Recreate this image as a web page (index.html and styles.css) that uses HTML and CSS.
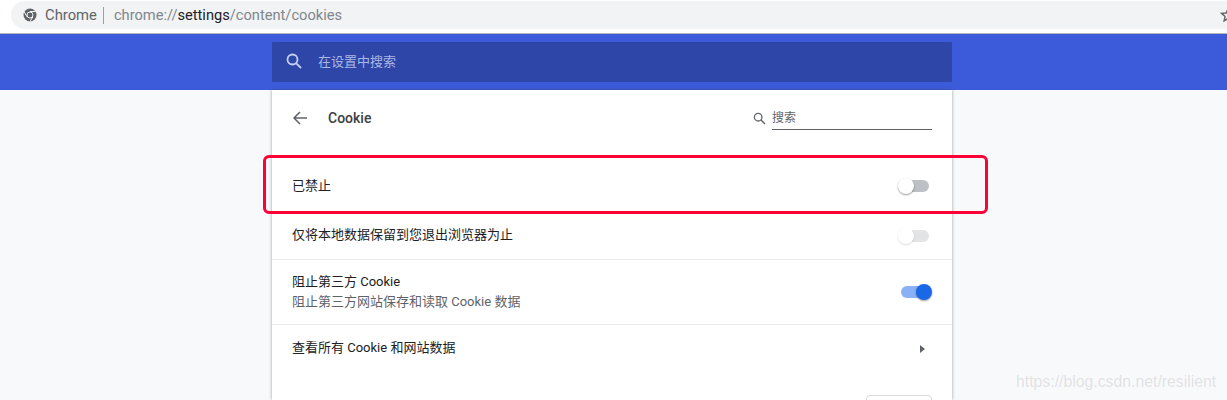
FILE: index.html
```html
<!DOCTYPE html>
<html>
<head>
    <title>Cookie</title>
    <link rel="stylesheet" href="styles.css">
</head>
<body>
    <div class="toolbar">
        <div class="omnibox">
            <svg class="chrome-icon" width="14" height="14" viewBox="0 0 14 14">
                <circle cx="7" cy="7" r="6.5" fill="#5f6368"/>
                <circle cx="7" cy="7" r="3" fill="#5f6368" stroke="#f1f3f4" stroke-width="1"/>
                <path d="M7 3.5h5.6M4 8.8 1.3 4M9.9 8.8 7 13.4" stroke="#f1f3f4" stroke-width="1" fill="none"/>
            </svg>
            <span class="site-name">Chrome</span>
            <span class="url">chrome://<b>settings</b>/content/cookies</span>
            <svg class="star" width="16" height="16" viewBox="0 0 16 16">
                <path d="M8 1.8 9.8 6l4.6.4-3.5 3 1 4.5L8 11.5l-3.9 2.4 1-4.5-3.5-3L6.200 6z" fill="none" stroke="#5f6368" stroke-width="1.400"/>
            </svg>
        </div>
    </div>

    <header>
        <div class="main-search">
            <svg width="18" height="18" viewBox="0 0 18 18">
                <circle cx="7.500" cy="7.500" r="5" fill="none" stroke="#c6d0f0" stroke-width="1.800"/>
                <path d="M11.300 11.300 16 16" stroke="#c6d0f0" stroke-width="1.800"/>
            </svg>
            <span class="main-search-text">在设置中搜索</span>
        </div>
    </header>

    <div class="page">
        <div class="card">
            <div class="card-head">
                <svg class="back" width="16" height="16" viewBox="0 0 16 16">
                    <path d="M15 8H2M8 2 2 8l6 6" fill="none" stroke="#5f6368" stroke-width="1.500"/>
                </svg>
                <h2>Cookie</h2>
                <div class="card-search">
                    <svg width="13" height="13" viewBox="0 0 13 13">
                        <circle cx="5.200" cy="5.200" r="3.800" fill="none" stroke="#5f6368" stroke-width="1.300"/>
                        <path d="M8 8l4 4" stroke="#5f6368" stroke-width="1.300"/>
                    </svg>
                    <span class="search-input">搜索</span>
                </div>
            </div>

            <div class="row row-first">
                <span>已禁止</span>
                <span class="toggle"></span>
            </div>
            <div class="row row-second">
                <span class="row-text-up">仅将本地数据保留到您退出浏览器为止</span>
                <span class="toggle toggle-disabled"></span>
            </div>
            <div class="row row-third">
                <div class="row-text-block">
                    <div>阻止第三方 Cookie</div>
                    <div class="secondary">阻止第三方网站保存和读取 Cookie 数据</div>
                </div>
                <span class="toggle toggle-on"></span>
            </div>
            <div class="row row-fourth">
                <span class="row-text-up">查看所有 Cookie 和网站数据</span>
                <span class="arrow"></span>
            </div>
            <div class="card-foot">
                <span class="foot-button"></span>
            </div>
        </div>
    </div>

    <div class="highlight"></div>
    <div class="watermark">https://blog.csdn.net/resilient</div>
</body>
</html>
```

FILE: styles.css
```css
html, body {
    height: 400px;
    overflow: hidden;
}

body {
    margin: 0;
    position: relative;
    font-family: Roboto, "Noto Sans CJK SC", sans-serif;
    font-size: 13px;
    color: #202124;
    background-color: #f8f9fb;
}

.toolbar {
    height: 34px;
    padding: 1px 0 0 11px;
    box-sizing: border-box;
    background-color: white;
    border-bottom: 1px solid #b4b6ba;
}

.omnibox {
    height: 28px;
    display: flex;
    align-items: center;
    padding-left: 12px;
    border-radius: 14px 0 0 14px;
    background-color: #f1f3f4;
}

.site-name {
    margin-left: 8px;
    padding-right: 6px;
    border-right: 1px solid #9aa0a6;
    font-size: 14.8px;
    line-height: 17px;
    color: #5f6368;
}

.url {
    margin-left: 10px;
    font-size: 14.65px;
    color: #80868b;
}

.url b {
    font-weight: 400;
    color: #202124;
}

.star {
    margin-left: auto;
    margin-right: -9px;
}

header {
    height: 56px;
    padding: 8px 0 0 272px;
    box-sizing: border-box;
    background-color: #3b5bdb;
}

.main-search {
    width: 680px;
    height: 40px;
    display: flex;
    align-items: center;
    gap: 15px;
    padding: 0 0 2px 13px;
    box-sizing: border-box;
    border-radius: 1px;
    background-color: #2d46a8;
    color: #aab6e3;
}

.main-search-text {
    padding-bottom: 2px;
}

.page {
    padding-left: 272px;
}

.card {
    width: 680px;
    height: 310px;
    overflow: hidden;
    background-color: white;
    box-shadow: 0 0 3px rgba(60, 64, 67, 0.5);
}

.card-head {
    height: 56px;
    display: flex;
    align-items: center;
    padding: 0 20px;
}

.back {
    margin-right: 20px;
}

h2 {
    margin: 0;
    font-size: 14px;
    font-weight: 500;
    color: #3c4043;
}

.card-search {
    margin-left: auto;
    display: flex;
    align-items: center;
    gap: 6px;
}

.search-input {
    width: 160px;
    height: 24px;
    line-height: 25px;
    box-sizing: border-box;
    border-bottom: 1px solid #5f6368;
    color: #5f6368;
    font-size: 12px;
}

.row {
    display: flex;
    align-items: center;
    justify-content: space-between;
    padding: 0 20px;
    line-height: 20px;
}

.row-first {
    height: 53px;
    margin-top: 13px;
}

.row-second {
    height: 47px;
    border-bottom: 1px solid #e8eaed;
}

.row-text-up {
    padding-bottom: 2px;
}

.row-third {
    height: 64px;
    border-bottom: 1px solid #e8eaed;
}

.row-text-block {
    padding-bottom: 1px;
}

.row-fourth {
    height: 47px;
}

.secondary {
    color: #5f6368;
}

.toggle {
    position: relative;
    width: 24px;
    height: 12px;
    margin-right: 3px;
    border-radius: 6px;
    background-color: #bdc1c6;
}

.toggle::after {
    content: "";
    position: absolute;
    left: -7px;
    top: -2px;
    width: 16px;
    height: 16px;
    border-radius: 50%;
    background-color: white;
    box-shadow: 0 1px 2px rgba(0, 0, 0, 0.4);
}

.toggle-disabled {
    background-color: #e3e4e6;
}

.toggle-disabled::after {
    box-shadow: 0 1px 2px rgba(0, 0, 0, 0.15);
}

.toggle-on {
    margin-right: 7px;
    background-color: #8ab0f5;
}

.toggle-on::after {
    left: 15px;
    background-color: #1a68e8;
}

.arrow {
    width: 0;
    height: 0;
    margin-right: 7px;
    border-left: 5px solid #5f6368;
    border-top: 4px solid transparent;
    border-bottom: 4px solid transparent;
}

.card-foot {
    padding: 23px 20px 0;
    display: flex;
    justify-content: flex-end;
}

.foot-button {
    width: 66px;
    height: 32px;
    box-sizing: border-box;
    border: 1px solid #dadce0;
    border-radius: 4px;
}

/* annotation drawn over the screenshot */
.highlight {
    position: absolute;
    left: 263px;
    top: 155px;
    width: 725px;
    height: 59px;
    box-sizing: border-box;
    border: 3px solid #fb0238;
    border-radius: 6px;
}

.watermark {
    position: absolute;
    left: 1016px;
    top: 373px;
    font-family: "Liberation Sans", sans-serif;
    font-size: 15.8px;
    color: rgba(170, 170, 170, 0.3);
}
```
